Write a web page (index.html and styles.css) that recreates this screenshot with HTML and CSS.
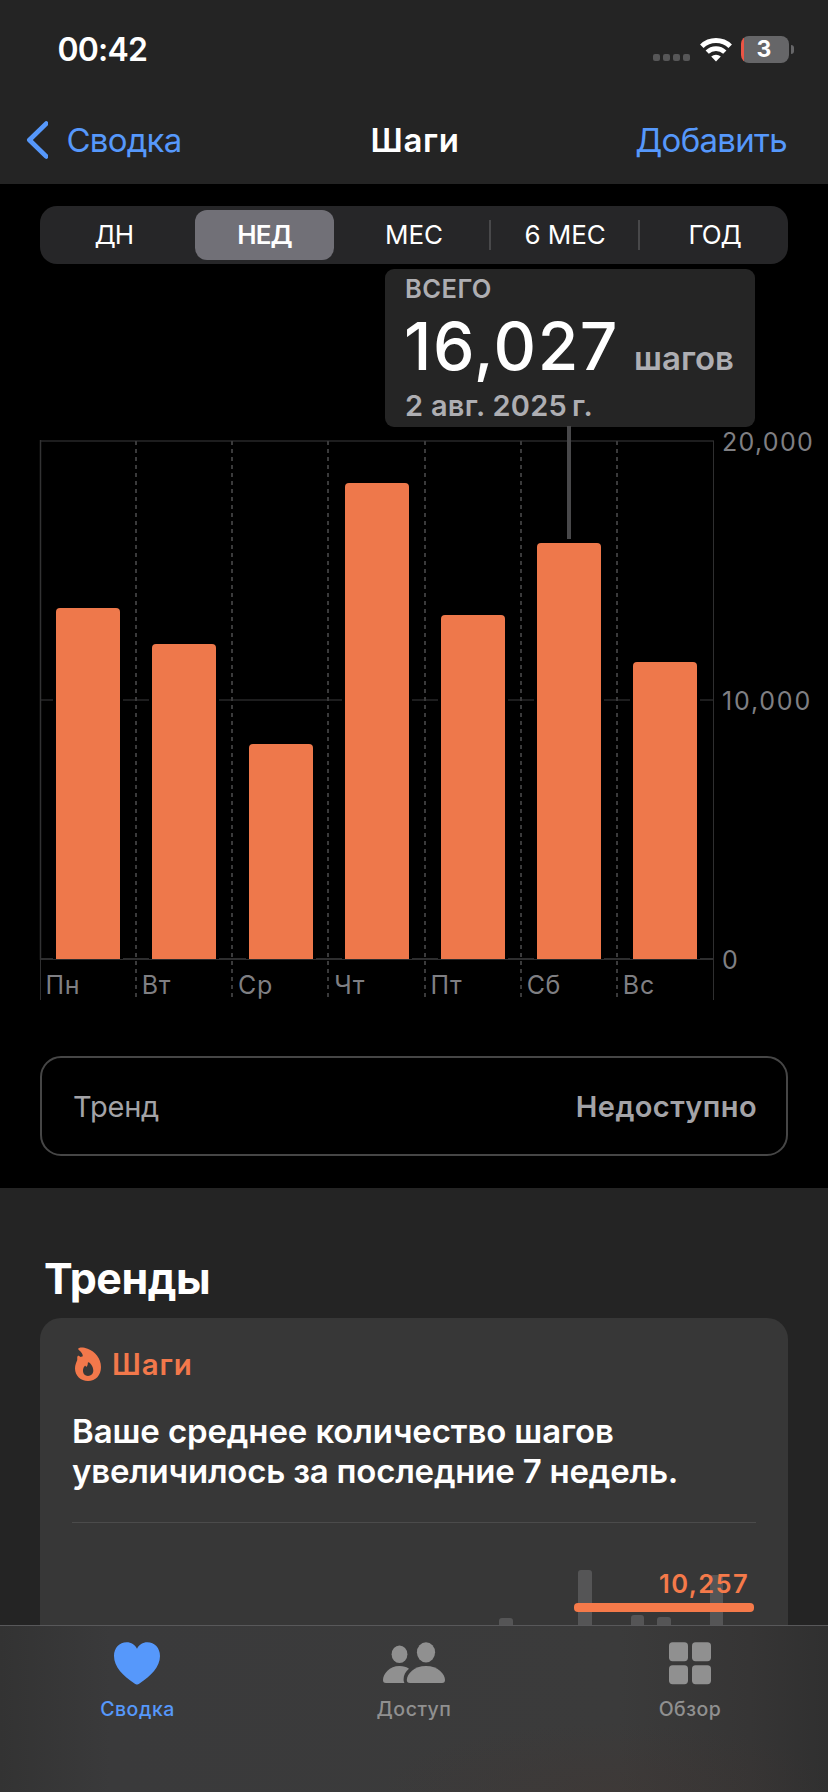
FILE: index.html
```html
<!DOCTYPE html>
<html lang="ru">
<head>
<meta charset="utf-8">
<title>Шаги</title>
<link rel="stylesheet" href="styles.css">
</head>
<body>
<div class="screen">
  <header class="header">
    <div class="status">
      <span class="clock">00:42</span>
      <div class="indicators">
        <div class="dots"><i></i><i></i><i></i><i></i></div>
        <svg class="wifi" width="32" height="25" viewBox="0 0 32 25" fill="none" stroke="#fff">
          <path d="M1.8 9.2A20.5 20.5 0 0 1 30.2 9.2" stroke-width="5"/>
          <path d="M7.2 15.2A12.6 12.6 0 0 1 24.8 15.2" stroke-width="4.6"/>
          <path d="M16 24.6L11.2 19.6A7 7 0 0 1 20.8 19.6Z" fill="#fff" stroke="none"/>
        </svg>
        <div class="battery"><div class="battery-body">3</div><div class="battery-nub"></div></div>
      </div>
    </div>
    <nav class="nav">
      <a class="nav-back">
        <svg width="24" height="40" viewBox="0 0 24 40" fill="none" stroke="#5698fb" stroke-width="4.8" stroke-linecap="round" stroke-linejoin="round"><path d="M22.2 3.600L5.400 20L22.2 36.400"/></svg>
        <span>Сводка</span>
      </a>
      <h1 class="nav-title">Шаги</h1>
      <a class="nav-add">Добавить</a>
    </nav>
  </header>

  <section class="chart-section">
    <div class="segments">
      <span class="segment segment-first">ДН</span>
      <span class="segment segment-active">НЕД</span>
      <span class="segment segment-wide">МЕС</span>
      <span class="segment segment-wide segment-split">6 МЕС</span>
      <span class="segment segment-split">ГОД</span>
    </div>

    <div class="tooltip">
      <span class="tooltip-label">ВСЕГО</span>
      <div class="tooltip-value"><b>16,027</b><span>шагов</span></div>
      <span class="tooltip-date">2 авг. 2025<span class="thin-space"></span>г.</span>
    </div>

    <div class="chart">
      <div class="plot">
        <svg class="grid" width="678" height="562" viewBox="0 0 678 562" fill="none">
          <path d="M0 2H674M0 261H674" stroke="#1d1d1e" stroke-width="2"/>
          <path d="M0 520H674" stroke="#2e2e2f" stroke-width="2"/>
          <path d="M.5 1V521" stroke="#323233" stroke-width="1.500"/>
          <path d="M.5 521V561M673.500 2V561" stroke="#2f2f30"/>
          <path d="M96 2V561M192 2V561M288 2V561M385 2V561M481 2V561M577 2V561" stroke="#3a3a3b" stroke-width="2" stroke-dasharray="4 4"/>
        </svg>
        <div class="bars">
          <div class="day"><div class="bar" style="height:351px"></div></div>
          <div class="day"><div class="bar" style="height:315px"></div></div>
          <div class="day"><div class="bar" style="height:215px"></div></div>
          <div class="day"><div class="bar" style="height:476px"></div></div>
          <div class="day"><div class="bar" style="height:344px"></div></div>
          <div class="day"><div class="bar" style="height:416px"></div></div>
          <div class="day"><div class="bar" style="height:297px"></div></div>
        </div>
        <div class="days"><span>Пн</span><span>Вт</span><span>Ср</span><span>Чт</span><span>Пт</span><span>Сб</span><span>Вс</span></div>
        <div class="marker"></div>
      </div>
      <div class="scale"><span>20,000</span><span class="scale-middle">10,000</span><span>0</span></div>
    </div>

    <div class="trend-row"><span class="trend-name">Тренд</span><span class="trend-state">Недоступно</span></div>
  </section>

  <section class="trends">
    <h2 class="trends-title">Тренды</h2>
    <article class="card">
      <div class="card-head">
        <svg width="26" height="34" viewBox="0 0 26 34"><path fill="#f2784b" fill-rule="evenodd" d="M3.6 1.2C4.8 0 9 .2 12.6 1.7C20.2 4.6 26 11.2 26 20C26 28.4 20.6 34 13 34C5.600 34 0 28.800 0 21.600C0 18.200 1.300 15.600 2.100 13.600C2.700 12 1.700 10 2.700 9C3.500 8.300 4.600 9.100 5.500 10L7.800 9.200C7.900 6 4.600 4 3.400 2.600C3 2.100 3.200 1.600 3.600 1.200ZM13.300 15.200C12.700 15.100 12.900 16.500 12.700 17.500C12.500 18.600 11.800 19.300 11.200 20C10.800 19.600 10.900 18.800 10.300 18.700C9.500 18.600 8 21.200 8 23.700C8 26.800 10 28.900 13 28.900C16 28.900 18.300 26.900 18.300 23.500C18.300 19.400 15.200 15.500 13.300 15.200Z"/></svg>
        <span>Шаги</span>
      </div>
      <p class="card-text"><span class="line-one">Ваше среднее количество шагов</span><br><span class="line-two">увеличилось за последние 7 недель.</span></p>
      <div class="mini">
        <i class="mini-bar mini-bar-a"></i><i class="mini-bar mini-bar-b"></i><i class="mini-bar mini-bar-c"></i><i class="mini-bar mini-bar-d"></i><i class="mini-bar mini-bar-e"></i>
        <div class="average"><span>10,257</span><div class="average-line"></div></div>
      </div>
    </article>
  </section>

  <footer class="tabs">
    <a class="tab tab-active">
      <svg width="46" height="43" viewBox="0 0 46 43" fill="#5698fb"><path d="M23 42.500C22.300 42.500 21.600 42.100 20.500 41.400C9 34 0 24.800 0 14C0 6 5.500 .3 12.600 .3C17.300 .3 21 2.900 23 6.800C25 2.900 28.700 .3 33.400 .3C40.500 .3 46 6 46 14C46 24.800 37 34 25.500 41.400C24.400 42.100 23.700 42.500 23 42.500Z"/></svg>
      <span>Сводка</span>
    </a>
    <a class="tab">
      <svg width="62" height="43" viewBox="0 0 62 43" fill="#909090"><ellipse cx="16.500" cy="12.200" rx="7.900" ry="8.800"/><ellipse cx="43" cy="10.300" rx="9.100" ry="10.100"/><path d="M3 41C.8 41 0 39.800 0 38C0 32 6.500 24 16.500 24C20.400 24 23.600 25 26 26.700C22.500 29.600 20.600 33.200 20.600 37.200C20.600 38.800 20.800 40 21.500 41Z"/><path d="M27 41C24.700 41 23.800 39.800 23.800 38C23.800 32 31.200 24 43 24C54.800 24 62 32 62 38C62 39.800 61.200 41 59 41Z"/></svg>
      <span>Доступ</span>
    </a>
    <a class="tab">
      <svg width="42" height="43" viewBox="0 0 42 43" fill="#909090"><rect width="19" height="19" y=".2" rx="3.600"/><rect x="23" y=".2" width="19" height="19" rx="3.600"/><rect y="23.200" width="19" height="19" rx="3.600"/><rect x="23" y="23.200" width="19" height="19" rx="3.600"/></svg>
      <span>Обзор</span>
    </a>
  </footer>
</div>
</body>
</html>
```
FILE: styles.css
```css
* { box-sizing: border-box; }

body {
  margin: 0;
  background: #000;
  font-family: Inter, "Liberation Sans", sans-serif;
  color: #fff;
}

h1, h2, p { margin: 0; }

.screen {
  width: 828px;
  height: 1792px;
  display: flex;
  flex-direction: column;
  overflow: hidden;
}

/* Status bar and navigation */
.header { height: 184px; flex: none; background: #242424; }

.status {
  height: 99px;
  padding: 0 34px 0 57.5px;
  display: flex;
  align-items: center;
  justify-content: space-between;
}

.clock { font-size: 32px; font-weight: 600; letter-spacing: -.8px; }
.indicators { display: flex; align-items: center; }
.dots { display: flex; gap: 3px; margin: 15px 10px 0 0; }
.dots i { width: 7px; height: 7px; border-radius: 2px; background: #565657; }
.wifi { margin-right: 9px; }
.battery { display: flex; align-items: center; gap: 2px; }

.battery-body {
  width: 48px;
  height: 27px;
  border-radius: 8px;
  background: linear-gradient(to right, #eb5545 0 2.5px, #666668 2.5px);
  text-align: center;
  font-size: 23px;
  line-height: 27px;
  font-weight: 700;
  padding-right: 2px;
}

.battery-nub { width: 3px; height: 9px; border-radius: 0 4px 4px 0; background: #666668; }

.nav {
  height: 82px;
  display: grid;
  grid-template-columns: 1fr auto 1fr;
  align-items: center;
  padding: 0 41px 0 24px;
  font-size: 33px;
  line-height: 40px;
}

.nav-back { display: flex; align-items: center; gap: 18.5px; color: #5698fb; letter-spacing: -.8px; }
.nav-title { font-size: 33px; font-weight: 600; letter-spacing: .6px; padding-left: 19px; }
.nav-add { color: #5698fb; text-align: right; letter-spacing: -.7px; }

/* Weekly chart */
.chart-section {
  height: 1004px;
  flex: none;
  position: relative;
  padding: 22px 0 0 40px;
}

.segments {
  width: 748px;
  height: 58px;
  border-radius: 17px;
  background: #262628;
  display: grid;
  grid-template-columns: repeat(5, 1fr);
  align-items: center;
}

.segment {
  text-align: center;
  font-size: 26px;
  line-height: 36px;
  letter-spacing: -1px;
}

.segment-first { padding-right: 2px; }
.segment-wide { letter-spacing: -.1px; }

.segment-active {
  margin: 0 5px;
  line-height: 50px;
  border-radius: 12px;
  background: #717077;
  font-weight: 600;
}

.segment-split {
  padding-left: 3px;
  background: linear-gradient(#48484a, #48484a) left center / 2px 30px no-repeat;
}

.tooltip {
  position: absolute;
  left: 385px;
  top: 85px;
  width: 370px;
  height: 158px;
  padding: 5px 0 0 20px;
  border-radius: 9px;
  background: #252525;
  display: flex;
  flex-direction: column;
  color: #aeaeb2;
  font-weight: 600;
}

.tooltip-label { font-size: 25.5px; line-height: 30px; letter-spacing: .45px; }
.tooltip-value { display: flex; align-items: baseline; height: 84px; margin-bottom: 3px; }
.tooltip-value b { font-size: 66px; line-height: 84px; font-weight: 500; letter-spacing: 1.5px; color: #fff; margin-left: -1px; }
.tooltip-value span { font-size: 33px; margin-left: 15px; }
.tooltip-date { font-size: 29px; line-height: 30px; letter-spacing: .25px; }
.thin-space { display: inline-block; width: 5px; }

.chart { display: flex; margin-top: 175px; height: 562px; }
.plot { position: relative; width: 678px; display: flex; flex-direction: column; }
.grid { position: absolute; left: 0; top: 0; overflow: visible; }

.bars {
  position: relative;
  flex: none;
  width: 673.6px;
  height: 520px;
  display: grid;
  grid-template-columns: repeat(7, 1fr);
}

.day { display: flex; align-items: flex-end; justify-content: center; }

.bar {
  width: 64px;
  border-radius: 4px 4px 0 0;
  background: #ee784b;
  box-shadow: -3px 0 #000, 3px 0 #000;
}

.days {
  flex: none;
  width: 673.6px;
  display: grid;
  grid-template-columns: repeat(7, 1fr);
  padding-top: 9px;
  font-size: 25px;
  line-height: 34px;
  letter-spacing: .7px;
  color: #7f7f83;
}

.days span { padding-left: 5.5px; }

.marker { position: absolute; left: 527px; top: -13px; width: 4px; height: 113px; background: #48484a; }

.scale {
  height: 550px;
  margin: -13px 0 0 4px;
  display: flex;
  flex-direction: column;
  justify-content: space-between;
  font-size: 25px;
  line-height: 32px;
  letter-spacing: 1.3px;
  color: #7f7f83;
}

.scale-middle { letter-spacing: 1.8px; }

.trend-row {
  width: 748px;
  height: 100px;
  margin-top: 55px;
  padding: 0 31px;
  border: 2px solid #464646;
  border-radius: 21px;
  display: flex;
  align-items: center;
  justify-content: space-between;
  font-size: 29px;
  color: #a3a3a7;
}

.trend-name { letter-spacing: -.2px; }
.trend-state { font-weight: 600; letter-spacing: .4px; margin-right: -2px; }

/* Trends */
.trends {
  height: 437px;
  flex: none;
  padding: 63px 40px 0;
  background: #242424;
  overflow: hidden;
}

.trends-title { font-size: 43px; line-height: 54px; letter-spacing: -.5px; padding-left: 4px; }

.card {
  height: 400px;
  margin-top: 13px;
  padding: 28px 32px 0;
  border-radius: 21px;
  background: #373737;
}

.card-head {
  display: flex;
  align-items: center;
  gap: 11px;
  height: 36px;
  padding-left: 3px;
  font-size: 29.5px;
  font-weight: 600;
  letter-spacing: .85px;
  color: #f2784b;
}

.card-text {
  height: 109px;
  margin: 29px -32px 0 0;
  font-size: 33px;
  line-height: 40px;
  font-weight: 600;
}

.line-one { letter-spacing: -.12px; }
.line-two { letter-spacing: -.22px; }

.mini { position: relative; height: 180px; width: 684px; margin-top: 2px; border-top: 1px solid #4b4b4b; }
.mini-bar { position: absolute; width: 14px; bottom: 0; border-radius: 3px 3px 0 0; background: #555556; }
.mini-bar-a { left: 427px; top: 95px; }
.mini-bar-b { left: 506px; top: 47px; }
.mini-bar-c { left: 559px; top: 92px; width: 13px; }
.mini-bar-d { left: 585px; top: 94px; }
.mini-bar-e { left: 638px; top: 52px; width: 13px; }

.average {
  position: relative;
  width: 180px;
  margin: 45px 0 0 502px;
  padding-top: 1px;
  text-align: right;
  color: #f57a4a;
  font-size: 25.5px;
  line-height: 30px;
  font-weight: 600;
  letter-spacing: 1.4px;
}

.average span { display: block; padding-right: 5px; }
.average-line { height: 8.5px; margin-top: 4px; border-radius: 4px; background: #f57a4a; }

/* Tab bar */
.tabs {
  flex: 1;
  padding: 16px 0 0;
  border-top: 1px solid #58585a;
  background:
    radial-gradient(ellipse 230px 70px at 610px 100%, rgba(70, 52, 46, .25), transparent),
    linear-gradient(to right, #333 0, #3a3a3b 110px, #3b3b3b 620px, #363535 750px, #303030 100%);
  display: grid;
  grid-template-columns: repeat(3, 276px);
}

.tab {
  display: flex;
  flex-direction: column;
  align-items: center;
  font-size: 19.5px;
  line-height: 26px;
  font-weight: 500;
  letter-spacing: .5px;
  color: #909090;
}

.tab span { margin-top: 11px; }
.tab-active { color: #5698fb; }
.tab:first-child { padding-right: 2px; }
.tab:first-child span { padding-left: 1px; }
```
